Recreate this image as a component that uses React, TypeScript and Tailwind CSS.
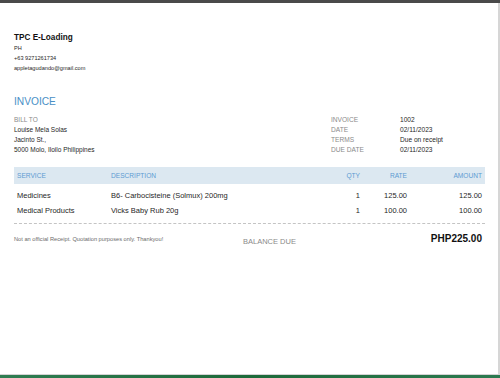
export default function App() {
  const items = [
    { service: "Medicines", description: "B6- Carbocisteine (Solmux) 200mg", qty: 1, rate: "125.00", amount: "125.00" },
    { service: "Medical Products", description: "Vicks Baby Rub 20g", qty: 1, rate: "100.00", amount: "100.00" },
  ];

  const details = [
    { label: "INVOICE", value: "1002" },
    { label: "DATE", value: "02/11/2023" },
    { label: "TERMS", value: "Due on receipt" },
    { label: "DUE DATE", value: "02/11/2023" },
  ];

  return (
    <div
      className="w-[500px] h-[378px] flex flex-col bg-white overflow-hidden"
      style={{ fontFamily: '"Liberation Sans", Arial, sans-serif' }}
    >
      <div className="h-[3px] bg-[#4a4a4a] shrink-0" />

      <div className="flex-1 flex min-h-0">
        <main className="flex-1 pl-[14px] pr-[13px] pt-[30px] text-[#1f1f1f]">
          <div>
            <h1 className="text-[8.2px] leading-[10px] font-bold text-[#111]">TPC E-Loading</h1>
            <p className="text-[5.6px] leading-[10px]">PH</p>
            <p className="text-[5.6px] leading-[10px]">+63 9271261734</p>
            <p className="text-[5.6px] leading-[10px]">appletagudando@gmail.com</p>
          </div>

          <h2 className="mt-[23px] text-[10.2px] leading-[12px] text-[#4a8fc6]">INVOICE</h2>

          <div className="mt-[7px] flex justify-between">
            <div className="text-[6.5px] leading-[10px]">
              <p className="text-[#8a8a8a]">BILL TO</p>
              <p>Louise Mela Solas</p>
              <p>Jacinto St.,</p>
              <p>5000 Molo, Iloilo Philippines</p>
            </div>
            <div className="w-[154px] text-[6.6px] leading-[10px]">
              {details.map((d) => (
                <div key={d.label} className="flex">
                  <span className="w-[69px] text-[#8a8a8a]">{d.label}</span>
                  <span>{d.value}</span>
                </div>
              ))}
            </div>
          </div>

          <div className="mt-[12px]">
            <div className="grid grid-cols-[94px_215px_40px_47px_75px] h-[17px] items-center bg-[#dce8f1] text-[6.6px] text-[#5c9bd1]">
              <span className="px-[3px]">SERVICE</span>
              <span className="px-[3px]">DESCRIPTION</span>
              <span className="px-[3px] text-right">QTY</span>
              <span className="px-[3px] text-right">RATE</span>
              <span className="px-[3px] text-right">AMOUNT</span>
            </div>
            <div className="pt-[4px]">
              {items.map((item) => (
                <div
                  key={item.service}
                  className="grid grid-cols-[94px_215px_40px_47px_75px] h-[15px] items-center text-[7.5px]"
                >
                  <span className="px-[3px]">{item.service}</span>
                  <span className="px-[3px]">{item.description}</span>
                  <span className="px-[3px] text-right">{item.qty}</span>
                  <span className="px-[3px] text-right">{item.rate}</span>
                  <span className="px-[3px] text-right">{item.amount}</span>
                </div>
              ))}
            </div>
            <div className="mt-[5px] border-t border-dashed border-[#c4c4c4]" />
          </div>

          <div className="mt-[9px] flex items-start">
            <p className="w-[229px] pt-[3px] text-[5.7px] leading-[7px] text-[#6b6b6b]">
              Not an official Receipt. Quotation purposes only. Thankyou!
            </p>
            <p className="pt-[4px] text-[7.5px] leading-[9px] text-[#8a8a8a]">BALANCE DUE</p>
            <p className="flex-1 pr-[3px] text-right text-[10px] leading-[12px] font-bold text-[#111]">
              PHP225.00
            </p>
          </div>
        </main>
        <div className="w-[2px] bg-[#d6d6d6] shrink-0" />
      </div>

      <div className="h-[1px] bg-[#d4d4d4] shrink-0" />
      <div className="h-[3px] shrink-0 bg-gradient-to-r from-[#2f7d52] via-[#1d6a3a] to-[#2c7a50]" />
    </div>
  );
}
